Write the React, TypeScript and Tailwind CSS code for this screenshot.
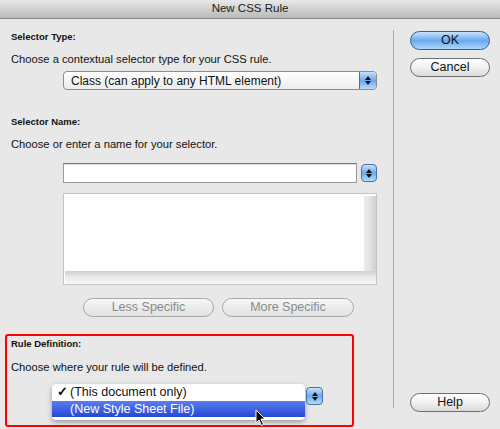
import React from "react";

function Stepper({ className = "" }: { className?: string }) {
  return (
    <div
      className={`flex flex-col items-center justify-center gap-[1px] rounded-[4px] border border-[#4b6f9e] bg-gradient-to-b from-[#c8e1fb] via-[#6aa9ec] to-[#b7dcfd] ${className}`}
    >
      <svg width="6" height="4" viewBox="0 0 6 4"><path d="M3 0 L6 4 L0 4 Z" fill="#111" /></svg>
      <svg width="6" height="4" viewBox="0 0 6 4"><path d="M0 0 L6 0 L3 4 Z" fill="#111" /></svg>
    </div>
  );
}

function AquaButton({ label, disabled = false, primary = false, className = "" }: { label: string; disabled?: boolean; primary?: boolean; className?: string }) {
  const base = "flex items-center justify-center rounded-full text-[12.5px] h-[19px] border";
  const style = primary
    ? "border-[#3d5f8c] bg-gradient-to-b from-[#c9e2fa] via-[#69aaee] to-[#aad6fb] text-[#111]"
    : disabled
    ? "border-[#a9a9a9] bg-gradient-to-b from-[#f7f7f7] via-[#ececec] to-[#e2e2e2] text-[#8a8a8a]"
    : "border-[#6e6e6e] bg-gradient-to-b from-[#ffffff] via-[#f1f1f1] to-[#dadada] text-[#111]";
  return <div className={`${base} ${style} ${className}`}>{label}</div>;
}

export default function App() {
  return (
    <div className="relative w-[500px] h-[429px] overflow-hidden bg-[#e8e8e8] font-['Liberation_Sans',Arial,sans-serif] text-[#111]">
      {/* Title bar */}
      <div className="h-[19px] border-b border-[#8c8c8c] bg-gradient-to-b from-[#e9e9e9] to-[#b9b9b9] flex items-center justify-center text-[11.5px] text-[#1a1a1a]">
        New CSS Rule
      </div>

      <div className="flex">
        {/* Left column */}
        <div className="w-[393px] flex flex-col">
          <div className="mt-[10px] h-[16px] ml-[11px] flex items-center text-[9.5px] font-bold">Selector Type:</div>
          <div className="mt-[6px] h-[16px] ml-[11px] flex items-center text-[11.2px]">
            Choose a contextual selector type for your CSS rule.
          </div>
          <div className="mt-[4px] ml-[63px] w-[314px] h-[19px] flex rounded-[4px] border border-[#8c8c8c] bg-gradient-to-b from-[#ffffff] to-[#ececec] overflow-hidden">
            <div className="flex-1 flex items-center pl-[7px] text-[12px]">Class (can apply to any HTML element)</div>
            <Stepper className="w-[17px] h-[17px] rounded-none border-0 border-l" />
          </div>

          <div className="mt-[24px] h-[16px] ml-[11px] flex items-center text-[9.5px] font-bold">Selector Name:</div>
          <div className="mt-[6px] h-[16px] ml-[11px] flex items-center text-[11.2px]">
            Choose or enter a name for your selector.
          </div>
          <div className="mt-[11px] ml-[63px] h-[20px] flex items-center gap-[4px]">
            <div className="w-[294px] h-[20px] bg-white border border-[#9a9a9a] border-t-[#7a7a7a] shadow-[inset_0_1px_1px_rgba(0,0,0,0.15)]" />
            <Stepper className="w-[16px] h-[18px]" />
          </div>

          <div className="mt-[10px] ml-[63px] w-[314px] h-[92px] border border-[#c4c4c4] bg-white flex flex-col">
            <div className="flex-1 flex">
              <div className="flex-1" />
              <div className="w-[12px] bg-gradient-to-r from-[#ececec] via-[#e2e2e2] to-[#cfcfcf] mt-[2px]" />
            </div>
            <div className="h-[13px] bg-gradient-to-b from-[#cfcfcf] via-[#ececec] to-[#f7f7f7] ml-[1px]" />
          </div>

          <div className="mt-[13px] ml-[83px] flex gap-[8px]">
            <AquaButton label="Less Specific" disabled className="w-[131px]" />
            <AquaButton label="More Specific" disabled className="w-[132px]" />
          </div>

          {/* Rule definition (highlighted) */}
          <div className="mt-[17px] ml-[5px] w-[349px] h-[93px] border-2 border-[#ff0000] rounded-[3px] flex flex-col">
            <div className="h-[16px] ml-[4px] flex items-center text-[9.5px] font-bold">Rule Definition:</div>
            <div className="mt-[7px] h-[16px] ml-[4px] flex items-center text-[11.2px]">
              Choose where your rule will be defined.
            </div>
            <div className="mt-[9px] ml-[45px] flex items-start gap-[1px]">
              <div className="w-[253px] bg-white rounded-[4px] shadow-[0_2px_5px_rgba(0,0,0,0.35)] pb-[3px] text-[12.5px]">
                <div className="h-[17px] flex items-center">
                  <span className="w-[18px] pl-[5px] font-bold">✓</span>
                  <span>(This document only)</span>
                </div>
                <div className="h-[16px] flex items-center bg-gradient-to-b from-[#5a7ef0] to-[#2747d2] text-white pl-[18px]">
                  (New Style Sheet File)
                </div>
              </div>
              <Stepper className="mt-[3px] w-[17px] h-[18px]" />
            </div>
          </div>
        </div>

        {/* Separator */}
        <div className="w-px h-[378px] mt-[11px] bg-[#a9a9a9]" />

        {/* Right column */}
        <div className="flex-1 flex flex-col pl-[16px] pr-[10px]">
          <AquaButton label="OK" primary className="mt-[12px] w-[80px]" />
          <AquaButton label="Cancel" className="mt-[8px] w-[80px]" />
          <div className="flex-1" />
          <AquaButton label="Help" className="mb-[15px] w-[80px]" />
        </div>
      </div>

      {/* Mouse cursor */}
      <svg className="absolute left-[255px] top-[409px]" width="12" height="18" viewBox="0 0 12 18">
        <path d="M1 1 L1 14 L4 11 L6.5 16.5 L8.5 15.5 L6 10 L10 10 Z" fill="#000" stroke="#fff" strokeWidth="1" />
      </svg>
    </div>
  );
}
